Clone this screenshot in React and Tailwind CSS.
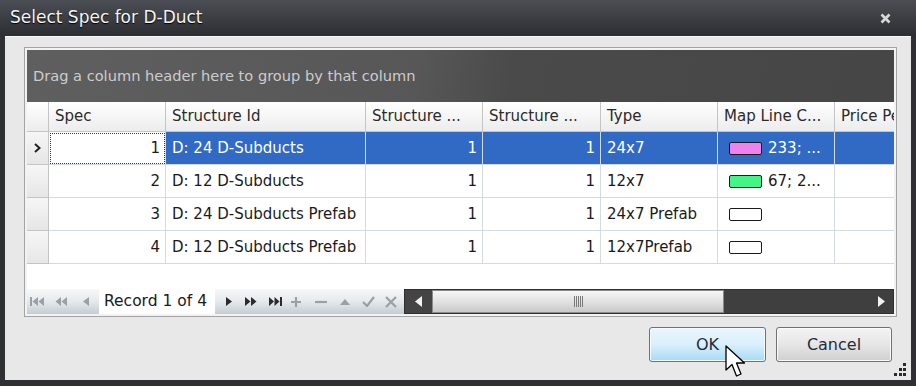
import React from 'react';

const cols = [
  { key: 'spec', title: 'Spec', w: 'w-[117px]', align: 'right' },
  { key: 'sid', title: 'Structure Id', w: 'w-[200px]', align: 'left' },
  { key: 's1', title: 'Structure ...', w: 'w-[117px]', align: 'right' },
  { key: 's2', title: 'Structure ...', w: 'w-[118px]', align: 'right' },
  { key: 'type', title: 'Type', w: 'w-[117px]', align: 'left' },
  { key: 'map', title: 'Map Line C...', w: 'w-[117px]', align: 'left' },
];

const rows = [
  { spec: '1', sid: 'D: 24 D-Subducts', s1: '1', s2: '1', type: '24x7', swatch: 'bg-[#ee82ee]', color: '233; ...' },
  { spec: '2', sid: 'D: 12 D-Subducts', s1: '1', s2: '1', type: '12x7', swatch: 'bg-[#43f586]', color: '67; 2...' },
  { spec: '3', sid: 'D: 24 D-Subducts Prefab', s1: '1', s2: '1', type: '24x7 Prefab', swatch: 'bg-white', color: '' },
  { spec: '4', sid: 'D: 12 D-Subducts Prefab', s1: '1', s2: '1', type: '12x7Prefab', swatch: 'bg-white', color: '' },
];

function Tri({ dir = 'left', color }) {
  return (
    <svg width="6" height="9" viewBox="0 0 6 9">
      {dir === 'left' ? <path d="M6 0 L0 4.5 L6 9 Z" fill={color} /> : <path d="M0 0 L6 4.5 L0 9 Z" fill={color} />}
    </svg>
  );
}

function NavBar() {
  const gray = '#9aa0a6';
  const dark = '#2b2b2b';
  return (
    <div className="flex h-full w-[377px] items-center bg-gradient-to-b from-[#f7f8f9] via-[#e6e9ec] to-[#c4ccd4]">
      <div className="flex w-[72px] items-center gap-[10px] pl-[3px]">
        <svg width="15" height="9" viewBox="0 0 15 9">
          <rect x="0" y="0" width="2" height="9" fill={gray} />
          <path d="M8 0 L2.5 4.5 L8 9 Z M14 0 L8.5 4.5 L14 9 Z" fill={gray} />
        </svg>
        <svg width="12" height="9" viewBox="0 0 12 9">
          <path d="M6 0 L0.5 4.5 L6 9 Z M12 0 L6.5 4.5 L12 9 Z" fill={gray} />
        </svg>
        <span className="ml-[6px]"><Tri dir="left" color={gray} /></span>
      </div>
      <div className="flex h-full w-[116px] items-center bg-white pl-[5px] text-[15.5px] text-[#1a1a1a]">Record 1 of 4</div>
      <div className="flex items-center pl-[11px]">
        <Tri dir="right" color={dark} />
        <svg className="ml-[13px]" width="12" height="9" viewBox="0 0 12 9">
          <path d="M0 0 L5.5 4.5 L0 9 Z M6 0 L11.5 4.5 L6 9 Z" fill={dark} />
        </svg>
        <svg className="ml-[12px]" width="13" height="9" viewBox="0 0 13 9">
          <path d="M0 0 L5 4.5 L0 9 Z M5.5 0 L10.5 4.5 L5.5 9 Z" fill={dark} />
          <rect x="11" y="0" width="2" height="9" fill={dark} />
        </svg>
        <svg className="ml-[8px]" width="12" height="12" viewBox="0 0 12 12">
          <path d="M6 1 V11 M1 6 H11" stroke={gray} strokeWidth="2.2" />
        </svg>
        <svg className="ml-[12px]" width="14" height="12" viewBox="0 0 14 12">
          <path d="M1 6 H13" stroke={gray} strokeWidth="2.2" />
        </svg>
        <svg className="ml-[12px]" width="10" height="7" viewBox="0 0 10 7">
          <path d="M0 7 L5 1 L10 7 Z" fill={gray} />
        </svg>
        <svg className="ml-[12px]" width="13" height="11" viewBox="0 0 13 11">
          <path d="M1 6 L5 10 L12 1" stroke={gray} strokeWidth="2.2" fill="none" />
        </svg>
        <svg className="ml-[10px]" width="12" height="12" viewBox="0 0 12 12">
          <path d="M1 1 L11 11 M11 1 L1 11" stroke={gray} strokeWidth="2.2" />
        </svg>
      </div>
    </div>
  );
}

function ScrollBar() {
  return (
    <div className="flex h-full flex-1 items-stretch border border-[#2f2f2f] bg-[#3f3f3f]">
      <div className="flex w-[27px] items-center justify-center bg-[#444]">
        <svg width="7" height="11" viewBox="0 0 7 11"><path d="M7 0 L0 5.5 L7 11 Z" fill="#f2f2f2" /></svg>
      </div>
      <div className="flex w-[292px] items-center justify-center border border-[#8a8a8a] bg-gradient-to-b from-[#f6f6f6] via-[#e2e2e2] to-[#c9c9c9]">
        <svg width="9" height="11" viewBox="0 0 9 11">
          <path d="M0.5 0 V11 M2.5 0 V11 M4.5 0 V11 M6.5 0 V11 M8.5 0 V11" stroke="#7a7a7a" strokeWidth="1" />
        </svg>
      </div>
      <div className="flex flex-1 items-center justify-end pr-[8px]">
        <svg width="7" height="11" viewBox="0 0 7 11"><path d="M0 0 L7 5.5 L0 11 Z" fill="#f2f2f2" /></svg>
      </div>
    </div>
  );
}

function Cell({ col, row, selected }) {
  const focused = selected && col.key === 'spec';
  const base = `${col.w} shrink-0 h-full flex items-center border-r border-b border-[#d3dae6] overflow-hidden whitespace-nowrap`;
  const bg = focused
    ? 'bg-white text-[#1a1a1a] outline-1 outline-dotted outline-[#333] -outline-offset-2'
    : selected
    ? 'bg-[#316ac5] text-white'
    : 'bg-white text-[#1a1a1a]';
  if (col.key === 'map') {
    return (
      <div className={`${base} ${bg} pl-[11px]`}>
        <span className={`h-[13px] w-[33px] shrink-0 rounded-[2px] border-[1.5px] border-[#1a1a1a] ${row.swatch}`} />
        <span className="ml-[6px]">{row.color}</span>
      </div>
    );
  }
  return (
    <div className={`${base} ${bg} ${col.align === 'right' ? 'justify-end pr-[5px]' : 'pl-[6px]'}`}>
      {row[col.key]}
    </div>
  );
}

export default function App() {
  return (
    <div
      className="relative flex h-[386px] w-[916px] flex-col overflow-hidden bg-[#2e3034]"
      style={{ fontFamily: '"DejaVu Sans", Tahoma, sans-serif' }}
    >
      {/* title bar */}
      <div className="flex h-[36px] shrink-0 items-center justify-between bg-gradient-to-b from-[#4b4e54] to-[#2c2e32] pl-[10px] pr-[25px]">
        <span className="text-[17px] text-[#f4f4f4] [text-shadow:0_1px_1px_#000]">Select Spec for D-Duct</span>
        <svg width="11" height="11" viewBox="0 0 11 11">
          <path d="M1.5 1.5 L9.5 9.5 M9.5 1.5 L1.5 9.5" stroke="#d8d8d8" strokeWidth="2.6" />
        </svg>
      </div>

      {/* content */}
      <div className="relative mx-[5px] mb-[6px] flex flex-1 flex-col border-t border-[#fafafa] bg-[#e8e8e8] pl-[19px] pr-[14px] pt-[10px]">
        <div className="flex h-[270px] w-[873px] flex-col border border-[#a3a3a3] bg-[#f2f2f2] p-[2px]">
          {/* group panel */}
          <div className="flex h-[52px] shrink-0 items-center bg-[linear-gradient(100deg,#5f5f5f_0%,#575757_45%,#4a4a4a_56%,#464646_100%)] pl-[6px] text-[14.6px] text-[#cccccc]">
            Drag a column header here to group by that column
          </div>
          {/* header */}
          <div className="flex h-[30px] shrink-0 text-[15px] text-[#2a2a2a]">
            <div className="h-full w-[22px] shrink-0 border-r border-b border-[#c4c4c4] bg-gradient-to-b from-white to-[#ececec]" />
            {cols.map((c) => (
              <div key={c.key} className={`${c.w} shrink-0 flex h-full items-center overflow-hidden whitespace-nowrap border-r border-b border-[#c4c4c4] bg-gradient-to-b from-white to-[#ececec] pl-[6px]`}>
                {c.title}
              </div>
            ))}
            <div className="flex h-full flex-1 items-center overflow-hidden whitespace-nowrap border-b border-[#c4c4c4] bg-gradient-to-b from-white to-[#ececec] pl-[6px]">
              Price Per
            </div>
          </div>
          {/* rows */}
          {rows.map((r, i) => (
            <div key={r.spec} className="flex h-[33px] shrink-0 text-[15px]">
              <div className="flex h-full w-[22px] shrink-0 items-center justify-center border-r border-b border-[#c4c4c4] bg-gradient-to-b from-[#f6f6f6] to-[#e6e6e6]">
                {i === 0 && (
                  <svg width="7" height="10" viewBox="0 0 7 10">
                    <path d="M1 1 L5.5 5 L1 9" stroke="#222" strokeWidth="2" fill="none" />
                  </svg>
                )}
              </div>
              {cols.map((c) => (
                <Cell key={c.key} col={c} row={r} selected={i === 0} />
              ))}
              <div className={`h-full flex-1 border-b border-[#d3dae6] ${i === 0 ? 'bg-[#316ac5]' : 'bg-white'}`} />
            </div>
          ))}
          <div className="flex-1 bg-white" />
          {/* navigator + scrollbar */}
          <div className="flex h-[25px] shrink-0">
            <NavBar />
            <ScrollBar />
          </div>
        </div>

        {/* buttons */}
        <div className="mt-[10px] flex justify-end gap-[10px] pr-[5px]">
          <button className="h-[35px] w-[117px] rounded-[3px] border border-[#3c7fb1] bg-gradient-to-b from-[#eaf6fd] via-[#d9f0fc] to-[#a7d9f5] text-[16px] text-[#1f2d3d] shadow-[inset_0_0_0_1px_#f4fbff]">
            OK
          </button>
          <button className="h-[35px] w-[116px] rounded-[3px] border border-[#707070] bg-gradient-to-b from-[#f4f4f4] via-[#e6e6e6] to-[#cfcfcf] text-[16px] text-[#1f2d3d] shadow-[inset_0_0_0_1px_#fbfbfb]">
            Cancel
          </button>
        </div>

        {/* resize grip */}
        <svg className="absolute bottom-[4px] right-[4px]" width="13" height="13" viewBox="0 0 13 13">
          <rect x="9" y="0" width="3" height="3" fill="#2a2a2a" />
          <rect x="5" y="5" width="3" height="3" fill="#2a2a2a" />
          <rect x="9" y="5" width="3" height="3" fill="#2a2a2a" />
          <rect x="0" y="10" width="3" height="3" fill="#2a2a2a" />
          <rect x="5" y="10" width="3" height="3" fill="#2a2a2a" />
          <rect x="9" y="10" width="3" height="3" fill="#2a2a2a" />
        </svg>
      </div>

      {/* mouse cursor */}
      <svg className="absolute left-[725px] top-[345px]" width="22" height="34" viewBox="0 0 22 34">
        <path d="M1 1 L1 25 L7 19.5 L11.5 31 L16 29 L11.5 18 L19.5 18 Z" fill="#fff" stroke="#000" strokeWidth="1.3" strokeLinejoin="round" />
      </svg>
    </div>
  );
}
